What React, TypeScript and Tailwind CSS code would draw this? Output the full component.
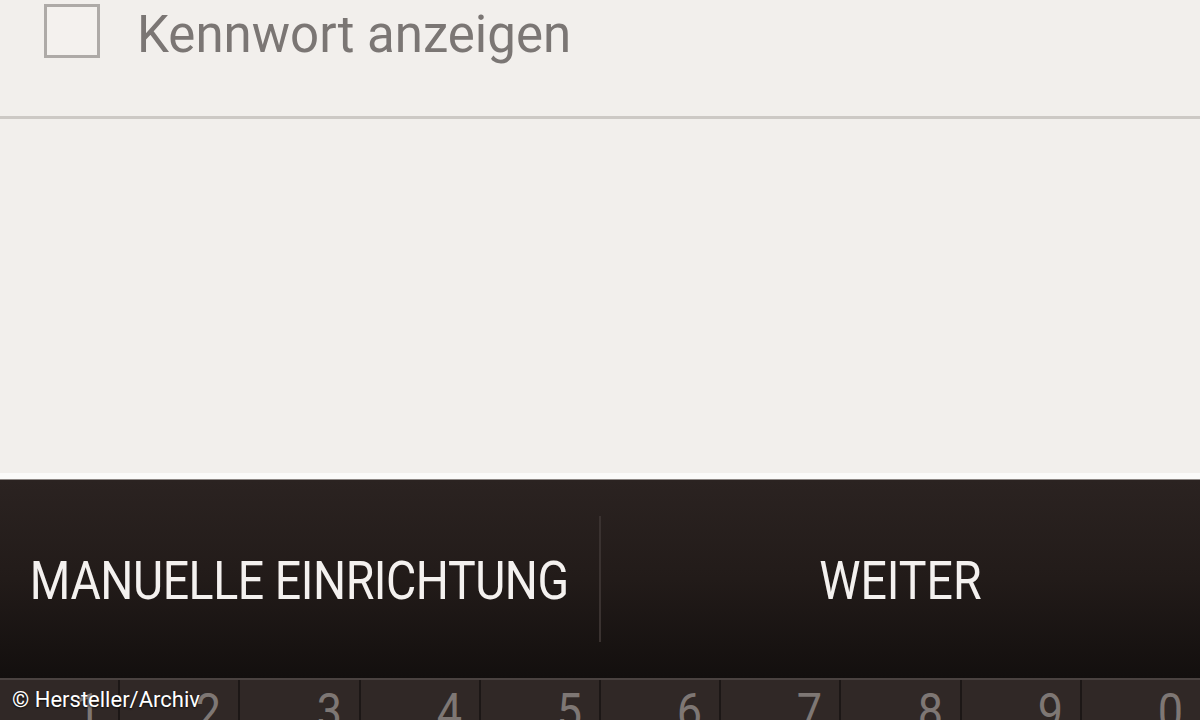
export default function App() {
  const keys = ["1", "2", "3", "4", "5", "6", "7", "8", "9", "0"];

  return (
    <div
      className="relative flex h-[720px] w-[1200px] flex-col overflow-hidden bg-[#f2efec]"
      style={{ fontFamily: "Roboto, 'Noto Sans', sans-serif" }}
    >
      {/* show password row */}
      <div className="flex h-[116px] items-start gap-[37px] pl-[44px] pt-[4px]">
        <div className="h-[54px] w-[56px] shrink-0 border-[3px] border-[#aeaaa7] bg-[#f4f1ee]" />
        <span className="-mt-[5px] text-[51px] leading-[72px] text-[#7b7674]">
          Kennwort anzeigen
        </span>
      </div>
      <div className="h-[3px] bg-[#cdc9c5]" />

      <div className="flex-1" />
      <div className="h-[6px] bg-[#fbfaf9]" />
      <div className="h-px bg-[#8d8784]" />

      {/* action bar */}
      <div className="flex h-[198px] bg-gradient-to-b from-[#2b2321] via-[#221b19] to-[#130f0e]">
        <button className="flex min-w-0 flex-1 basis-0 items-center justify-center pt-[4px]">
          <span className="inline-block origin-center scale-x-[0.86] whitespace-nowrap text-[54px] leading-none tracking-[-0.5px] text-[#f4f1ef]">
            MANUELLE EINRICHTUNG
          </span>
        </button>
        <div className="my-[36px] w-[2px] shrink-0 bg-[#3a3230]" />
        <button className="flex min-w-0 flex-1 basis-0 items-center justify-center pt-[4px]">
          <span className="inline-block origin-center scale-x-[0.86] whitespace-nowrap text-[54px] leading-none text-[#f4f1ef]">
            WEITER
          </span>
        </button>
      </div>

      {/* keyboard number row */}
      <div className="flex h-[42px] border-t-2 border-[#4a4240] bg-[#302826]">
        {keys.map((k, i) => (
          <div
            key={k}
            className={`flex min-w-0 flex-1 basis-0 justify-end overflow-hidden pr-[17px] ${
              i < keys.length - 1 ? "border-r-2 border-[#1c1716]" : ""
            }`}
          >
            <span className="mt-[7px] inline-block origin-right scale-x-[0.9] text-[50px] leading-none text-[#7e7774]">
              {k}
            </span>
          </div>
        ))}
      </div>

      <span
        className="absolute bottom-[9px] left-[12px] text-[22px] leading-none text-white"
        style={{ textShadow: "0 1px 2px rgba(0,0,0,0.8)" }}
      >
        © Hersteller/Archiv
      </span>
    </div>
  );
}
